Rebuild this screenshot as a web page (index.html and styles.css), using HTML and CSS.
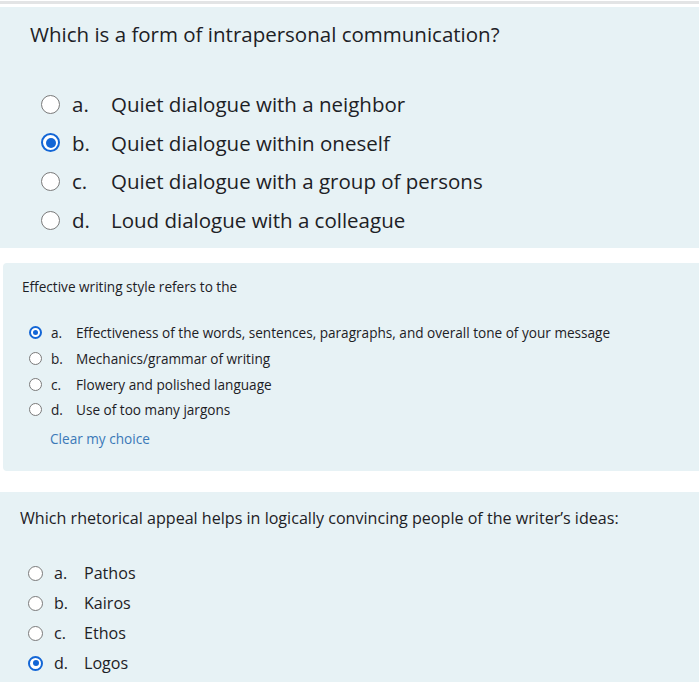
FILE: index.html
```html
<!DOCTYPE html>
<html>
<head>
<meta charset="utf-8">
<link rel="stylesheet" href="styles.css">
</head>
<body>
<div class="topbar"></div>
<section class="q q1">
  <div class="qtext">Which is a form of intrapersonal communication?</div>
  <div class="answers">
    <div class="opt"><span class="radio"></span><span class="letter">a.</span><span class="label">Quiet dialogue with a neighbor</span></div>
    <div class="opt"><span class="radio checked"></span><span class="letter">b.</span><span class="label">Quiet dialogue within oneself</span></div>
    <div class="opt"><span class="radio"></span><span class="letter">c.</span><span class="label">Quiet dialogue with a group of persons</span></div>
    <div class="opt"><span class="radio"></span><span class="letter">d.</span><span class="label">Loud dialogue with a colleague</span></div>
  </div>
</section>
<section class="q q2">
  <div class="qtext">Effective writing style refers to the</div>
  <div class="answers">
    <div class="opt"><span class="radio checked"></span><span class="letter">a.</span><span class="label">Effectiveness of the words, sentences, paragraphs, and overall tone of your message</span></div>
    <div class="opt"><span class="radio"></span><span class="letter">b.</span><span class="label">Mechanics/grammar of writing</span></div>
    <div class="opt"><span class="radio"></span><span class="letter">c.</span><span class="label">Flowery and polished language</span></div>
    <div class="opt"><span class="radio"></span><span class="letter">d.</span><span class="label">Use of too many jargons</span></div>
  </div>
  <div class="clear">Clear my choice</div>
</section>
<section class="q q3">
  <div class="qtext">Which rhetorical appeal helps in logically convincing people of the writer’s ideas:</div>
  <div class="answers">
    <div class="opt"><span class="radio"></span><span class="letter">a.</span><span class="label">Pathos</span></div>
    <div class="opt"><span class="radio"></span><span class="letter">b.</span><span class="label">Kairos</span></div>
    <div class="opt"><span class="radio"></span><span class="letter">c.</span><span class="label">Ethos</span></div>
    <div class="opt"><span class="radio checked"></span><span class="letter">d.</span><span class="label">Logos</span></div>
  </div>
</section>
</body>
</html>
```
FILE: styles.css
```css
html, body {
  margin: 0;
  padding: 0;
  background: #ffffff;
}
body {
  font-family: "Open Sans", "Noto Sans", sans-serif;
  color: #1d2125;
  width: 699px;
  overflow: hidden;
}
.topbar {
  height: 3px;
  margin-top: 1px;
  background: #e3e4e5;
  margin-bottom: 3px;
}
.q {
  background: #e7f2f5;
  box-sizing: border-box;
}
.answers {
  display: flex;
  flex-direction: column;
}
.opt {
  display: flex;
  align-items: center;
  white-space: nowrap;
}
.radio {
  box-sizing: border-box;
  border-radius: 50%;
  background: #ffffff;
  border: 1px solid #7a7a7a;
  flex: none;
  position: relative;
}
.radio.checked {
  border: 2px solid #1366d6;
}
.radio.checked::after {
  content: "";
  position: absolute;
  border-radius: 50%;
  background: #1366d6;
}
.letter { flex: none; }

/* Panel 1 */
.q1 {
  height: 241px;
  padding: 13px 0 0 30px;
  font-size: 20.5px;
}
.q1 .qtext { line-height: 28px; }
.q1 .answers { margin-top: 37px; }
.q1 .opt { height: 38.6px; }
.q1 .radio { width: 19px; height: 19px; margin-left: 11px; }
.q1 .radio.checked::after { left: 2.5px; top: 2.5px; width: 10px; height: 10px; }
.q1 .letter { margin-left: 12px; width: 39px; }

/* Panel 2 */
.q2 {
  margin: 15px 0 0 3px;
  height: 208px;
  border-radius: 4px 0 0 4px;
  padding: 14px 0 0 19px;
  font-size: 13.6px;
}
.q2 .qtext { line-height: 20px; }
.q2 .answers { margin-top: 23px; }
.q2 .opt { height: 25.7px; }
.q2 .radio { width: 13px; height: 13px; margin-left: 7px; }
.q2 .radio.checked::after { left: 2px; top: 2px; width: 5px; height: 5px; }
.q2 .letter { margin-left: 9px; width: 25px; }
.q2 .clear {
  margin: 6px 0 0 28px;
  line-height: 20px;
  color: #3b79b8;
}

/* Panel 3 */
.q3 {
  margin-top: 21px;
  height: 190px;
  padding: 14px 0 0 20px;
  font-size: 16.1px;
}
.q3 .qtext { line-height: 24px; }
.q3 .answers { margin-top: 28px; }
.q3 .opt { height: 30px; }
.q3 .radio { width: 15px; height: 15px; margin-left: 8px; }
.q3 .radio.checked::after { left: 2.5px; top: 2.5px; width: 6px; height: 6px; }
.q3 .letter { margin-left: 11px; width: 30px; }
```
